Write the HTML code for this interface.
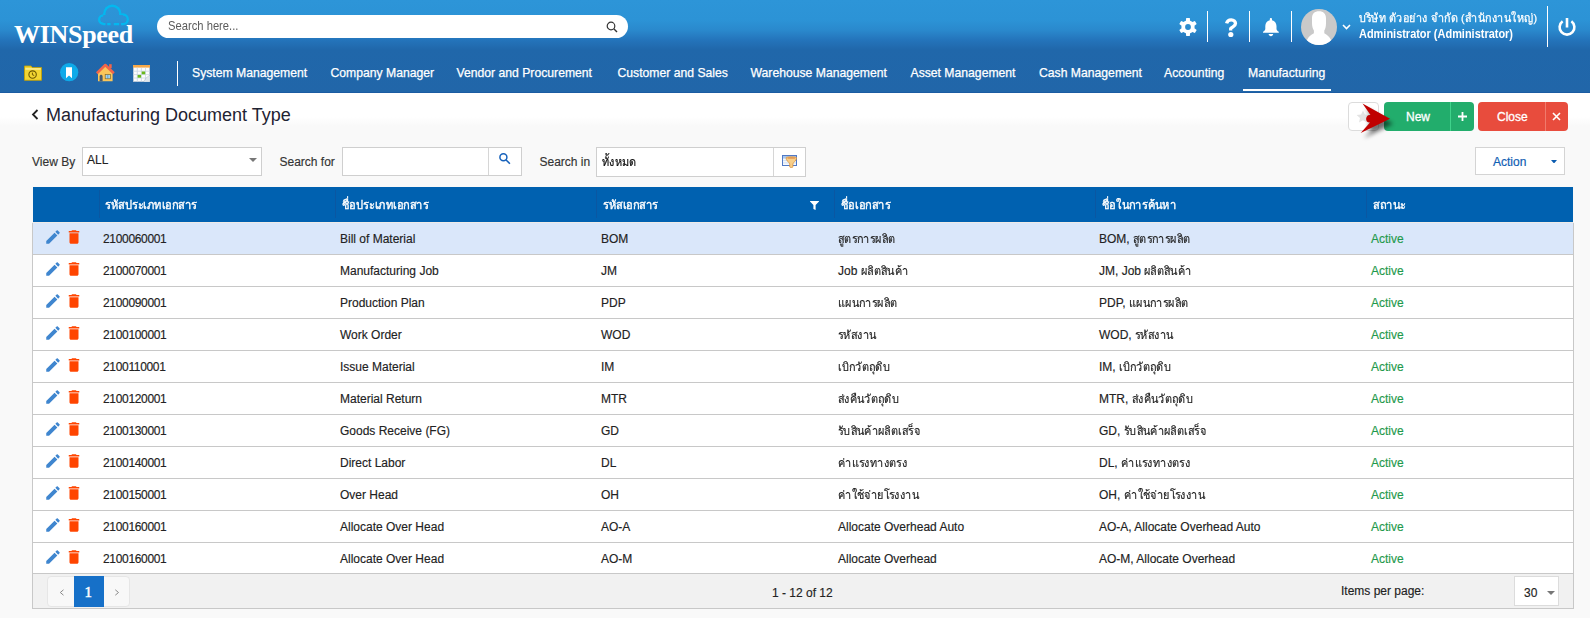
<!DOCTYPE html>
<html><head><meta charset="utf-8">
<style>
*{box-sizing:border-box;margin:0;padding:0}
html,body{width:1590px;height:618px;overflow:hidden}
body{font-family:"Liberation Sans",sans-serif;font-size:12px;line-height:14px;color:#222;background:#f9f9f9;position:relative}
.abs{position:absolute}
#top{position:absolute;left:0;top:0;width:1590px;height:93px;border-bottom:1px solid #1b5ca2;
 background:linear-gradient(to bottom,#2d95d8 0px,#2c93d6 20px,#2a89cd 30px,#2474bb 40px,#2067aa 50px,#2166a9 92px)}
.logo{position:absolute;left:14px;top:28px;font-family:"Liberation Serif",serif;font-weight:bold;font-size:26px;color:#fff;letter-spacing:-0.3px;white-space:nowrap}
.search{position:absolute;left:157px;top:15px;width:471px;height:23px;border-radius:12px;background:#fff}
.search span{position:absolute;left:10.5px;top:4px;font-size:12.2px;color:#5c5c5c;transform:scaleX(.92);transform-origin:0 0;white-space:nowrap}
.nav{position:absolute;top:66px;font-size:12.2px;color:#fff;white-space:nowrap;-webkit-text-stroke:0.25px #fff}
.vsep{position:absolute;width:1px;background:#fff}
.hdrtxt{position:absolute;color:#fff;white-space:nowrap}
#content{position:absolute;left:0;top:93px;width:1590px;height:525px;background:linear-gradient(to bottom,#fff 0,#fff 24px,#f9f9f9 33px)}
.title{position:absolute;left:46px;top:108px;font-size:18px;color:#1f2333;white-space:nowrap}
.lbl{position:absolute;font-size:12px;color:#333;white-space:nowrap;-webkit-text-stroke:0.15px #333}
.box{position:absolute;background:#fff;border:1px solid #cfcfcf}
.btn{position:absolute;border-radius:4px;color:#fff;font-size:12px}
#table{position:absolute;left:32px;top:186px;width:1542px;height:423px;border:1px solid #c8c8c8;background:#fff}
#thead{position:absolute;left:32px;top:186px;width:1542px;height:37px;background:#0061b0;border:1px solid #f8f8f8;border-bottom-color:#eeeae6}
.th{position:absolute;top:11px;color:#fff;font-weight:normal;-webkit-text-stroke:0.35px #fff;font-size:12px;white-space:nowrap;transform:scaleX(.93);transform-origin:0 0}
.thsep{position:absolute;top:3px;width:1px;height:28px;background:#0a57a2}
.row{position:absolute;left:33px;width:1540px;height:32px;border-bottom:1px solid #c8c8c8;background:#fff}
.row.sel{background:#dae7fa}
.td{position:absolute;top:9px;font-size:12px;color:#222;white-space:nowrap;-webkit-text-stroke:0.15px currentColor}
.act{color:#1f9a4c}
.thai{display:inline-block;transform:scaleX(.91);transform-origin:0 0}
#footer{position:absolute;left:33px;top:574px;width:1540px;height:34px;background:#f1f1f1}
</style></head><body>
<div id="top">
  <div class="logo">WINSpeed</div>
  <svg class="abs" style="left:97px;top:3px" width="34" height="24" viewBox="0 0 34 24">
    <defs><mask id="cm" maskUnits="userSpaceOnUse" x="0" y="0" width="34" height="24">
      <g fill="#fff"><circle cx="6.3" cy="16.6" r="5.300000000000001"/><circle cx="15.3" cy="10.8" r="9.200000000000001"/><circle cx="26" cy="16.3" r="5.949999999999999"/><rect x="6.3" y="14" width="19.7" height="8.25"/></g>
      <g fill="#000"><circle cx="6.3" cy="16.6" r="3.0000000000000004"/><circle cx="15.3" cy="10.8" r="6.9"/><circle cx="26" cy="16.3" r="3.65"/><rect x="6.3" y="12" width="19.7" height="7.950000000000003"/>
      <rect x="8.5" y="18" width="1.7" height="6"/><rect x="13.6" y="18" width="3.2" height="6"/><rect x="22.1" y="18" width="2" height="6"/></g>
    </mask></defs>
    <rect x="0" y="0" width="34" height="24" fill="#03b8ef" mask="url(#cm)"/>
  </svg>
  <div class="search"><span>Search here...</span>
    <svg class="abs" style="left:449px;top:6px" width="12" height="12" viewBox="0 0 12 12"><circle cx="5" cy="5" r="3.8" fill="none" stroke="#333" stroke-width="1.2"/><path d="M7.8 7.8 L11 11" stroke="#333" stroke-width="1.4"/></svg>
  </div>
  <!-- toolbar icons -->
  <svg class="abs" style="left:24px;top:64.5px" width="18" height="16" viewBox="0 0 18 16">
    <path d="M0.5 1 H7 L8.3 2.6 H17.5 V15.3 H0.5 Z" fill="#f2d532" stroke="#c2a008" stroke-width="0.9"/>
    <rect x="1.3" y="3.4" width="15.4" height="1.1" fill="#fff7c0"/>
    <circle cx="8.6" cy="9.6" r="3.7" fill="none" stroke="#6b5600" stroke-width="1.1"/>
    <path d="M8.4 7.6 V9.8 L10.2 10.4" stroke="#6b5600" stroke-width="1" fill="none"/>
  </svg>
  <svg class="abs" style="left:59.8px;top:62.6px" width="19" height="19" viewBox="0 0 19 19">
    <circle cx="9.2" cy="9.2" r="9.1" fill="#0eaae9"/>
    <path d="M6 4.3 H12 V15.3 L9 12.6 L6 15.3 Z" fill="#fff"/>
  </svg>
  <svg class="abs" style="left:96px;top:62.5px" width="19" height="19" viewBox="0 0 19 19">
    <path d="M2 9.5 L9.3 2.8 L16.6 9.5 V18.3 H2 Z" fill="#fac65a"/>
    <path d="M0.8 10.2 L9.3 2 L17.8 10.2" stroke="#f0654a" stroke-width="2.6" fill="none" stroke-linejoin="round"/>
    <rect x="13.1" y="1.2" width="2.6" height="4" fill="#f0654a"/>
    <path d="M3.6 18.3 V13.5 C3.6 12.4 4.3 11.8 5.1 11.8 C5.9 11.8 6.6 12.4 6.6 13.5 V18.3 Z" fill="#485a6c"/>
    <rect x="9.2" y="11.5" width="5.2" height="4.3" fill="#9fd3f0" stroke="#8a6a20" stroke-width="0.7"/>
    <path d="M11.8 11.5 V15.8" stroke="#4a7fa8" stroke-width="0.6"/>
  </svg>
  <svg class="abs" style="left:132.5px;top:65px" width="17" height="17" viewBox="0 0 17 17">
    <rect x="0.3" y="0.3" width="16.4" height="16.4" fill="#fdfdfd" stroke="#b8c4d0" stroke-width="0.6"/>
    <rect x="0" y="0" width="17" height="2.6" fill="#f7a94a"/>
    <path d="M0.3 6.2 H16.7 M0.3 9.6 H16.7 M0.3 13 H16.7 M4.3 2.6 V16.7 M8.4 2.6 V16.7 M12.5 2.6 V16.7" stroke="#c9d6e4" stroke-width="0.8"/>
    <rect x="4.6" y="9.9" width="3.5" height="2.8" fill="#6ab81e"/>
    <rect x="8.7" y="6.5" width="3.5" height="2.8" fill="#6ab81e"/>
    <path d="M10.5 16.7 L16.7 10.5 V16.7 Z" fill="#dfe6ec"/>
    <path d="M10.5 16.7 C12.5 14.5 12.5 12.5 16.7 10.5" stroke="#aab8c4" stroke-width="0.6" fill="none"/>
  </svg>
  <div class="vsep" style="left:177px;top:61px;height:25px"></div>
  <div class="nav" style="left:192px">System Management</div>
  <div class="nav" style="left:330.5px">Company Manager</div>
  <div class="nav" style="left:456.5px">Vendor and Procurement</div>
  <div class="nav" style="left:617.5px">Customer and Sales</div>
  <div class="nav" style="left:750.5px">Warehouse Management</div>
  <div class="nav" style="left:910.5px">Asset Management</div>
  <div class="nav" style="left:1039px">Cash Management</div>
  <div class="nav" style="left:1164px">Accounting</div>
  <div class="nav" style="left:1248px">Manufacturing</div>
  <div class="abs" style="left:1243px;top:89px;width:88px;height:2px;background:#fff"></div>

  <!-- right side icons -->
  <svg class="abs" style="left:1179px;top:18px" width="18" height="18" viewBox="0 0 18 18">
    <path fill="#fff" fill-rule="evenodd" d="M6.90 2.74 L7.21 0 L10.79 0 L11.10 2.74 A6.60 6.60 0 0 1 13.37 4.05 L15.90 2.95 L17.69 6.05 L15.47 7.69 A6.60 6.60 0 0 1 15.47 10.31 L17.69 11.95 L15.90 15.05 L13.37 13.95 A6.60 6.60 0 0 1 11.10 15.26 L10.79 18 L7.21 18 L6.90 15.26 A6.60 6.60 0 0 1 4.63 13.95 L2.10 15.05 L0.31 11.95 L2.53 10.31 A6.60 6.60 0 0 1 2.53 7.69 L0.31 6.05 L2.10 2.95 L4.63 4.05 A6.60 6.60 0 0 1 6.90 2.74 Z M11.9 9 A2.9 2.9 0 1 0 6.1 9 A2.9 2.9 0 1 0 11.9 9 Z"/>
  </svg>
  <div class="vsep" style="left:1207px;top:11px;height:31px"></div>
  <svg class="abs" style="left:1224px;top:17.8px" width="14" height="20" viewBox="0 0 14 20"><path d="M2.6 5.4 C3.2 2.9 5 1.9 7.2 1.9 C9.9 1.9 11.5 3.6 11.5 5.6 C11.5 8.2 8.4 8.6 6.7 10.6 V12.4" fill="none" stroke="#fff" stroke-width="3.3" stroke-linejoin="round"/><circle cx="6.8" cy="16.5" r="2.6" fill="#fff"/></svg>
  <div class="vsep" style="left:1249px;top:11px;height:31px"></div>
  <svg class="abs" style="left:1263px;top:17.8px" width="16" height="19" viewBox="0 0 16 19">
    <path fill="#fff" d="M7.9 0 C8.6 0 9 0.5 9 1.2 V2.3 C11.8 2.9 13.4 5 13.5 8 V11 C13.6 12 14.5 13 15.8 13.8 V14.8 H0 V13.8 C1.3 13 2.2 12 2.3 11 V8 C2.4 5 4 2.9 6.8 2.3 V1.2 C6.8 0.5 7.2 0 7.9 0 Z"/>
    <path fill="#fff" d="M5.6 16 H10.2 C10 17.3 9.1 18.2 7.9 18.2 C6.7 18.2 5.8 17.3 5.6 16 Z"/>
  </svg>
  <div class="vsep" style="left:1291px;top:11px;height:31px"></div>
  <svg class="abs" style="left:1301px;top:9px" width="36" height="36" viewBox="0 0 36 36">
    <defs><clipPath id="cc"><circle cx="18" cy="18" r="18"/></clipPath></defs>
    <circle cx="18" cy="18" r="18" fill="#c9c9c9"/>
    <g clip-path="url(#cc)" fill="#fff">
      <path d="M11 9.5 C11 4.5 13.5 2.2 18 2.2 C22.5 2.2 25 4.5 25 9.5 V14 C25 17 24.5 19.5 23.3 21.5 V24.2 C26 25.6 28.6 27.6 30 31 L33 36 H3 L6 31 C7.4 27.6 10 25.6 12.9 24.2 V21.5 C11.7 19.5 11 17 11 14 Z"/>
      <path d="M20.5 1.5 L27 1 L25.3 7 C24.5 5 23 3.2 20.5 1.5 Z" fill="#c9c9c9"/>
    </g>
  </svg>
  <svg class="abs" style="left:1341.5px;top:23.5px" width="9" height="6" viewBox="0 0 9 6"><path d="M1 1 L4.5 4.5 L8 1" stroke="#fff" stroke-width="1.6" fill="none"/></svg>
  <div class="hdrtxt" style="left:1359px;top:11px;font-size:11.6px;transform:scaleX(.93);transform-origin:0 0;-webkit-text-stroke:0.25px #fff">บริษัท ตัวอย่าง จำกัด (สำนักงานใหญ่)</div>
  <div class="hdrtxt" style="left:1359px;top:26.5px;font-size:12px;font-weight:bold;transform:scaleX(.913);transform-origin:0 0">Administrator (Administrator)</div>
  <div class="vsep" style="left:1547px;top:6px;height:41px"></div>
  <svg class="abs" style="left:1557px;top:17px" width="20" height="20" viewBox="0 0 20 20">
    <path d="M5.6 4.3 A7.4 7.4 0 1 0 14.4 4.3" fill="none" stroke="#fff" stroke-width="2.6"/>
    <path d="M10 1 V10.5" stroke="#fff" stroke-width="2.6"/>
  </svg>
</div>

<div id="content"></div>
<svg class="abs" style="left:31px;top:109px" width="8" height="11" viewBox="0 0 8 11"><path d="M6.5 1 L2 5.5 L6.5 10" stroke="#222" stroke-width="1.8" fill="none"/></svg>
<div class="title">Manufacturing Document Type</div>

<!-- buttons -->
<div class="btn" style="left:1348px;top:102px;width:31px;height:29px;background:#fff;border:1px solid #dcdcdc"></div>
<svg class="abs" style="left:1356px;top:110px" width="14" height="13" viewBox="0 0 14 13"><path d="M7 0.5 L8.9 4.6 L13.4 5 L10 8 L11 12.5 L7 10.2 L3 12.5 L4 8 L0.6 5 L5.1 4.6 Z" fill="#e3e3e3"/></svg>
<div class="btn" style="left:1384px;top:102px;width:90px;height:29px;background:#22ad6c"></div>
<div class="abs" style="left:1450px;top:102px;width:1px;height:29px;background:#3fd38b"></div>
<div class="hdrtxt" style="left:1406px;top:110px;font-size:12px;-webkit-text-stroke:0.3px #fff">New</div>
<svg class="abs" style="left:1457.5px;top:111.8px" width="9" height="9" viewBox="0 0 9 9"><path d="M4.5 0 V9 M0 4.5 H9" stroke="#fff" stroke-width="1.8"/></svg>
<div class="btn" style="left:1478px;top:102px;width:90px;height:29px;background:#e84c3d"></div>
<div class="abs" style="left:1545px;top:102px;width:1px;height:29px;background:#f07a6c"></div>
<div class="hdrtxt" style="left:1497px;top:110px;font-size:12px;-webkit-text-stroke:0.3px #fff">Close</div>
<svg class="abs" style="left:1552px;top:112px" width="9" height="9" viewBox="0 0 9 9"><path d="M1 1 L8 8 M8 1 L1 8" stroke="#fff" stroke-width="1.6"/></svg>

<!-- red arrow annotation -->
<svg class="abs" style="left:1355px;top:98px" width="50" height="45" viewBox="0 0 50 45">
  <defs><filter id="sh" x="-30%" y="-30%" width="160%" height="160%"><feGaussianBlur stdDeviation="2.2"/></filter></defs>
  <path d="M8 5.5 L35 20.8 L6 35 L14 27 C9 26 10 18 15 17 Z" fill="#000" opacity="0.55" filter="url(#sh)" transform="translate(3 5)"/>
  <path d="M7.5 5.5 L35 20.8 L5.7 35 L15 24.5 C9.5 25 10 16 15.5 17 Z" fill="#c00000"/>
</svg>

<div class="lbl" style="left:32px;top:155px">View By</div>
<div class="box" style="left:82px;top:147px;width:180px;height:29px"></div>
<div class="lbl" style="left:87px;top:153px;color:#222">ALL</div>
<svg class="abs" style="left:249px;top:158px" width="8" height="4" viewBox="0 0 8 4"><path d="M0 0 H8 L4 4 Z" fill="#777"/></svg>

<div class="lbl" style="left:279.5px;top:155px">Search for</div>
<div class="box" style="left:342px;top:147px;width:180px;height:29px"></div>
<div class="abs" style="left:488px;top:148px;width:1px;height:27px;background:#d6d6d6"></div>
<svg class="abs" style="left:498px;top:153px" width="14" height="13" viewBox="0 0 14 13"><circle cx="5.4" cy="4.3" r="3.5" fill="none" stroke="#1762bb" stroke-width="1.5"/><path d="M7.9 6.8 L11.9 10.7" stroke="#1762bb" stroke-width="1.6"/></svg>

<div class="lbl" style="left:539.5px;top:155px">Search in</div>
<div class="box" style="left:596px;top:147px;width:210px;height:30px"></div>
<div class="abs" style="left:773px;top:148px;width:1px;height:28px;background:#d6d6d6"></div>
<div class="lbl thai" style="left:602px;top:155px;color:#111;position:absolute;-webkit-text-stroke:0.2px #111">ทั้งหมด</div>
<svg class="abs" style="left:782px;top:155px" width="15" height="13" viewBox="0 0 15 13">
  <rect x="0.5" y="0.5" width="14" height="10" fill="#f6f9fd" stroke="#5079c6" stroke-width="1"/>
  <rect x="1" y="1" width="13" height="2.6" fill="#a8c8ee"/>
  <path d="M1 5.6 H14 M1 7.9 H14" stroke="#c7d8ef" stroke-width="0.8"/>
  <path d="M4 2.8 C4 1.5 14.6 1.5 14.6 2.8 C14.6 5.6 11.6 7 10.9 8.9 V11.9 C10.9 12.7 7.7 12.7 7.7 11.9 V8.9 C7 7 4 5.6 4 2.8 Z" fill="#f7cf8a" stroke="#d88a30" stroke-width="0.7"/>
  <ellipse cx="9.3" cy="2.9" rx="4" ry="0.9" fill="#e39852"/>
</svg>

<div class="btn" style="left:1475px;top:147px;width:90px;height:28px;background:#fff;border:1px solid #d4d4d4;border-radius:0"></div>
<div class="hdrtxt" style="left:1493px;top:155px;font-size:12px;color:#1060b4;-webkit-text-stroke:0.2px #1060b4">Action</div>
<svg class="abs" style="left:1551px;top:159.8px" width="6" height="3.5" viewBox="0 0 6 3.5"><path d="M0 0 H6 L3 3.5 Z" fill="#0b5cb0"/></svg>

<!-- table -->
<div id="table"></div>
<div id="thead">
  <div class="thsep" style="left:66px"></div>
  <div class="th" style="left:72px">รหัสประเภทเอกสาร</div>
  <div class="thsep" style="left:302px"></div>
  <div class="th" style="left:309px">ชื่อประเภทเอกสาร</div>
  <div class="thsep" style="left:563px"></div>
  <div class="th" style="left:570px">รหัสเอกสาร</div>
  <svg class="abs" style="left:777px;top:14px" width="9" height="9" viewBox="0 0 9 9"><path d="M0 0 H9 V0.6 L5.6 4 V9 L3.4 8 V4 L0 0.6 Z" fill="#fff"/></svg>
  <div class="thsep" style="left:801px"></div>
  <div class="th" style="left:808px">ชื่อเอกสาร</div>
  <div class="thsep" style="left:1062px"></div>
  <div class="th" style="left:1069px">ชื่อในการค้นหา</div>
  <div class="thsep" style="left:1333px"></div>
  <div class="th" style="left:1340px">สถานะ</div>
</div>
<div id="rows"><div class="row sel" style="top:223px;height:32px"><svg class="abs" style="left:10.85px;top:4.65px" width="18" height="18" viewBox="0 0 24 24"><path d="M3 17.25V21h3.75L17.81 9.94l-3.75-3.75L3 17.25zM20.71 7.04c.39-.39.39-1.02 0-1.41l-2.34-2.34c-.39-.39-1.020-.39-1.41 0l-1.83 1.83 3.75 3.75 1.830-1.83z" fill="#3f86cf"/></svg><svg class="abs" style="left:32.25px;top:4.65px" width="18" height="18" viewBox="0 0 24 24"><path d="M6 19c0 1.1.9 2 2 2h8c1.1 0 2-.9 2-2V7H6v12zM19 4h-3.5l-1-1h-5l-1 1H5v2h14V4z" fill="#ff4500"/></svg><div class="td" style="left:70px;letter-spacing:-0.33px">2100060001</div><div class="td" style="left:307px">Bill of Material</div><div class="td" style="left:568px">BOM</div><div class="td" style="left:805px"><span class="thai">สูตรการผลิต</span></div><div class="td" style="left:1066px">BOM, <span class="thai">สูตรการผลิต</span></div><div class="td act" style="left:1338px">Active</div></div><div class="row" style="top:255px;height:32px"><svg class="abs" style="left:10.85px;top:4.65px" width="18" height="18" viewBox="0 0 24 24"><path d="M3 17.25V21h3.75L17.81 9.94l-3.75-3.75L3 17.25zM20.71 7.04c.39-.39.39-1.02 0-1.41l-2.34-2.34c-.39-.39-1.020-.39-1.41 0l-1.83 1.83 3.75 3.75 1.830-1.83z" fill="#3f86cf"/></svg><svg class="abs" style="left:32.25px;top:4.65px" width="18" height="18" viewBox="0 0 24 24"><path d="M6 19c0 1.1.9 2 2 2h8c1.1 0 2-.9 2-2V7H6v12zM19 4h-3.5l-1-1h-5l-1 1H5v2h14V4z" fill="#ff4500"/></svg><div class="td" style="left:70px;letter-spacing:-0.33px">2100070001</div><div class="td" style="left:307px">Manufacturing Job</div><div class="td" style="left:568px">JM</div><div class="td" style="left:805px">Job <span class="thai">ผลิตสินค้า</span></div><div class="td" style="left:1066px">JM, Job <span class="thai">ผลิตสินค้า</span></div><div class="td act" style="left:1338px">Active</div></div><div class="row" style="top:287px;height:32px"><svg class="abs" style="left:10.85px;top:4.65px" width="18" height="18" viewBox="0 0 24 24"><path d="M3 17.25V21h3.75L17.81 9.94l-3.75-3.75L3 17.25zM20.71 7.04c.39-.39.39-1.02 0-1.41l-2.34-2.34c-.39-.39-1.020-.39-1.41 0l-1.83 1.83 3.75 3.75 1.830-1.83z" fill="#3f86cf"/></svg><svg class="abs" style="left:32.25px;top:4.65px" width="18" height="18" viewBox="0 0 24 24"><path d="M6 19c0 1.1.9 2 2 2h8c1.1 0 2-.9 2-2V7H6v12zM19 4h-3.5l-1-1h-5l-1 1H5v2h14V4z" fill="#ff4500"/></svg><div class="td" style="left:70px;letter-spacing:-0.33px">2100090001</div><div class="td" style="left:307px">Production Plan</div><div class="td" style="left:568px">PDP</div><div class="td" style="left:805px"><span class="thai">แผนการผลิต</span></div><div class="td" style="left:1066px">PDP, <span class="thai">แผนการผลิต</span></div><div class="td act" style="left:1338px">Active</div></div><div class="row" style="top:319px;height:32px"><svg class="abs" style="left:10.85px;top:4.65px" width="18" height="18" viewBox="0 0 24 24"><path d="M3 17.25V21h3.75L17.81 9.94l-3.75-3.75L3 17.25zM20.71 7.04c.39-.39.39-1.02 0-1.41l-2.34-2.34c-.39-.39-1.020-.39-1.41 0l-1.83 1.83 3.75 3.75 1.830-1.83z" fill="#3f86cf"/></svg><svg class="abs" style="left:32.25px;top:4.65px" width="18" height="18" viewBox="0 0 24 24"><path d="M6 19c0 1.1.9 2 2 2h8c1.1 0 2-.9 2-2V7H6v12zM19 4h-3.5l-1-1h-5l-1 1H5v2h14V4z" fill="#ff4500"/></svg><div class="td" style="left:70px;letter-spacing:-0.33px">2100100001</div><div class="td" style="left:307px">Work Order</div><div class="td" style="left:568px">WOD</div><div class="td" style="left:805px"><span class="thai">รหัสงาน</span></div><div class="td" style="left:1066px">WOD, <span class="thai">รหัสงาน</span></div><div class="td act" style="left:1338px">Active</div></div><div class="row" style="top:351px;height:32px"><svg class="abs" style="left:10.85px;top:4.65px" width="18" height="18" viewBox="0 0 24 24"><path d="M3 17.25V21h3.75L17.81 9.94l-3.75-3.75L3 17.25zM20.71 7.04c.39-.39.39-1.02 0-1.41l-2.34-2.34c-.39-.39-1.020-.39-1.41 0l-1.83 1.83 3.75 3.75 1.830-1.83z" fill="#3f86cf"/></svg><svg class="abs" style="left:32.25px;top:4.65px" width="18" height="18" viewBox="0 0 24 24"><path d="M6 19c0 1.1.9 2 2 2h8c1.1 0 2-.9 2-2V7H6v12zM19 4h-3.5l-1-1h-5l-1 1H5v2h14V4z" fill="#ff4500"/></svg><div class="td" style="left:70px;letter-spacing:-0.33px">2100110001</div><div class="td" style="left:307px">Issue Material</div><div class="td" style="left:568px">IM</div><div class="td" style="left:805px"><span class="thai">เบิกวัตถุดิบ</span></div><div class="td" style="left:1066px">IM, <span class="thai">เบิกวัตถุดิบ</span></div><div class="td act" style="left:1338px">Active</div></div><div class="row" style="top:383px;height:32px"><svg class="abs" style="left:10.85px;top:4.65px" width="18" height="18" viewBox="0 0 24 24"><path d="M3 17.25V21h3.75L17.81 9.94l-3.75-3.75L3 17.25zM20.71 7.04c.39-.39.39-1.02 0-1.41l-2.34-2.34c-.39-.39-1.020-.39-1.41 0l-1.83 1.83 3.75 3.75 1.830-1.83z" fill="#3f86cf"/></svg><svg class="abs" style="left:32.25px;top:4.65px" width="18" height="18" viewBox="0 0 24 24"><path d="M6 19c0 1.1.9 2 2 2h8c1.1 0 2-.9 2-2V7H6v12zM19 4h-3.5l-1-1h-5l-1 1H5v2h14V4z" fill="#ff4500"/></svg><div class="td" style="left:70px;letter-spacing:-0.33px">2100120001</div><div class="td" style="left:307px">Material Return</div><div class="td" style="left:568px">MTR</div><div class="td" style="left:805px"><span class="thai">ส่งคืนวัตถุดิบ</span></div><div class="td" style="left:1066px">MTR, <span class="thai">ส่งคืนวัตถุดิบ</span></div><div class="td act" style="left:1338px">Active</div></div><div class="row" style="top:415px;height:32px"><svg class="abs" style="left:10.85px;top:4.65px" width="18" height="18" viewBox="0 0 24 24"><path d="M3 17.25V21h3.75L17.81 9.94l-3.75-3.75L3 17.25zM20.71 7.04c.39-.39.39-1.02 0-1.41l-2.34-2.34c-.39-.39-1.020-.39-1.41 0l-1.83 1.83 3.75 3.75 1.830-1.83z" fill="#3f86cf"/></svg><svg class="abs" style="left:32.25px;top:4.65px" width="18" height="18" viewBox="0 0 24 24"><path d="M6 19c0 1.1.9 2 2 2h8c1.1 0 2-.9 2-2V7H6v12zM19 4h-3.5l-1-1h-5l-1 1H5v2h14V4z" fill="#ff4500"/></svg><div class="td" style="left:70px;letter-spacing:-0.33px">2100130001</div><div class="td" style="left:307px">Goods Receive (FG)</div><div class="td" style="left:568px">GD</div><div class="td" style="left:805px"><span class="thai">รับสินค้าผลิตเสร็จ</span></div><div class="td" style="left:1066px">GD, <span class="thai">รับสินค้าผลิตเสร็จ</span></div><div class="td act" style="left:1338px">Active</div></div><div class="row" style="top:447px;height:32px"><svg class="abs" style="left:10.85px;top:4.65px" width="18" height="18" viewBox="0 0 24 24"><path d="M3 17.25V21h3.75L17.81 9.94l-3.75-3.75L3 17.25zM20.71 7.04c.39-.39.39-1.02 0-1.41l-2.34-2.34c-.39-.39-1.020-.39-1.41 0l-1.83 1.83 3.75 3.75 1.830-1.83z" fill="#3f86cf"/></svg><svg class="abs" style="left:32.25px;top:4.65px" width="18" height="18" viewBox="0 0 24 24"><path d="M6 19c0 1.1.9 2 2 2h8c1.1 0 2-.9 2-2V7H6v12zM19 4h-3.5l-1-1h-5l-1 1H5v2h14V4z" fill="#ff4500"/></svg><div class="td" style="left:70px;letter-spacing:-0.33px">2100140001</div><div class="td" style="left:307px">Direct Labor</div><div class="td" style="left:568px">DL</div><div class="td" style="left:805px"><span class="thai">ค่าแรงทางตรง</span></div><div class="td" style="left:1066px">DL, <span class="thai">ค่าแรงทางตรง</span></div><div class="td act" style="left:1338px">Active</div></div><div class="row" style="top:479px;height:32px"><svg class="abs" style="left:10.85px;top:4.65px" width="18" height="18" viewBox="0 0 24 24"><path d="M3 17.25V21h3.75L17.81 9.94l-3.75-3.75L3 17.25zM20.71 7.04c.39-.39.39-1.02 0-1.41l-2.34-2.34c-.39-.39-1.020-.39-1.41 0l-1.83 1.83 3.75 3.75 1.830-1.83z" fill="#3f86cf"/></svg><svg class="abs" style="left:32.25px;top:4.65px" width="18" height="18" viewBox="0 0 24 24"><path d="M6 19c0 1.1.9 2 2 2h8c1.1 0 2-.9 2-2V7H6v12zM19 4h-3.5l-1-1h-5l-1 1H5v2h14V4z" fill="#ff4500"/></svg><div class="td" style="left:70px;letter-spacing:-0.33px">2100150001</div><div class="td" style="left:307px">Over Head</div><div class="td" style="left:568px">OH</div><div class="td" style="left:805px"><span class="thai">ค่าใช้จ่ายโรงงาน</span></div><div class="td" style="left:1066px">OH, <span class="thai">ค่าใช้จ่ายโรงงาน</span></div><div class="td act" style="left:1338px">Active</div></div><div class="row" style="top:511px;height:32px"><svg class="abs" style="left:10.85px;top:4.65px" width="18" height="18" viewBox="0 0 24 24"><path d="M3 17.25V21h3.75L17.81 9.94l-3.75-3.75L3 17.25zM20.71 7.04c.39-.39.39-1.02 0-1.41l-2.34-2.34c-.39-.39-1.020-.39-1.41 0l-1.83 1.83 3.75 3.75 1.830-1.83z" fill="#3f86cf"/></svg><svg class="abs" style="left:32.25px;top:4.65px" width="18" height="18" viewBox="0 0 24 24"><path d="M6 19c0 1.1.9 2 2 2h8c1.1 0 2-.9 2-2V7H6v12zM19 4h-3.5l-1-1h-5l-1 1H5v2h14V4z" fill="#ff4500"/></svg><div class="td" style="left:70px;letter-spacing:-0.33px">2100160001</div><div class="td" style="left:307px">Allocate Over Head</div><div class="td" style="left:568px">AO-A</div><div class="td" style="left:805px">Allocate Overhead Auto</div><div class="td" style="left:1066px">AO-A, Allocate Overhead Auto</div><div class="td act" style="left:1338px">Active</div></div><div class="row" style="top:543px;height:31px"><svg class="abs" style="left:10.85px;top:4.65px" width="18" height="18" viewBox="0 0 24 24"><path d="M3 17.25V21h3.75L17.81 9.94l-3.75-3.75L3 17.25zM20.71 7.04c.39-.39.39-1.02 0-1.41l-2.34-2.34c-.39-.39-1.020-.39-1.41 0l-1.83 1.83 3.75 3.75 1.830-1.83z" fill="#3f86cf"/></svg><svg class="abs" style="left:32.25px;top:4.65px" width="18" height="18" viewBox="0 0 24 24"><path d="M6 19c0 1.1.9 2 2 2h8c1.1 0 2-.9 2-2V7H6v12zM19 4h-3.5l-1-1h-5l-1 1H5v2h14V4z" fill="#ff4500"/></svg><div class="td" style="left:70px;letter-spacing:-0.33px">2100160001</div><div class="td" style="left:307px">Allocate Over Head</div><div class="td" style="left:568px">AO-M</div><div class="td" style="left:805px">Allocate Overhead</div><div class="td" style="left:1066px">AO-M, Allocate Overhead</div><div class="td act" style="left:1338px">Active</div></div></div>
<div id="footer"><div class="abs" style="left:14px;top:2px;width:83px;height:31px;border:1px solid #e6e6e6;border-radius:4px;background:#f8f8f8"></div><div class="abs" style="left:41px;top:2px;width:30px;height:31px;background:#1670c8"></div><div class="abs" style="left:51.5px;top:10.5px;font-family:'Liberation Serif',serif;font-size:15px;color:#fff;-webkit-text-stroke:0.5px #fff">1</div><svg class="abs" style="left:25.5px;top:14.5px" width="6" height="7" viewBox="0 0 6 7"><path d="M4.5 0.8 L1.3 3.5 L4.5 6.2" stroke="#8a8a8a" stroke-width="1" fill="none"/></svg><svg class="abs" style="left:81px;top:14.5px" width="6" height="7" viewBox="0 0 6 7"><path d="M1.3 0.8 L4.5 3.5 L1.3 6.2" stroke="#8a8a8a" stroke-width="1" fill="none"/></svg><div class="td" style="left:739px;top:12px">1 - 12 of 12</div><div class="td" style="left:1308px;top:10px">Items per page:</div><div class="abs" style="left:1481px;top:2px;width:45px;height:30px;border:1px solid #dcdcdc;background:#fff"></div><div class="td" style="left:1491px;top:12px">30</div><svg class="abs" style="left:1514px;top:17px" width="8" height="4" viewBox="0 0 8 4"><path d="M0 0 H8 L4 4 Z" fill="#777"/></svg></div>
</body></html>
